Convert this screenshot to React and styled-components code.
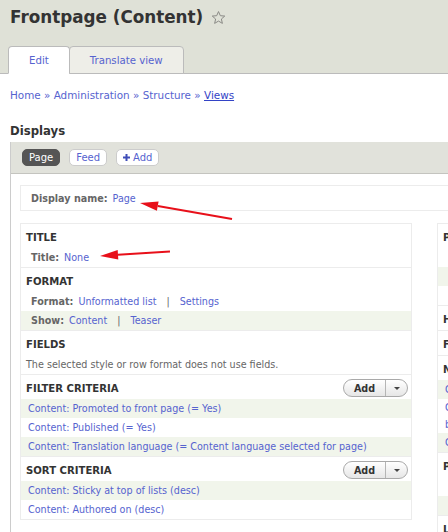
import React from "react";
import styled, { createGlobalStyle } from "styled-components";

const GlobalStyle = createGlobalStyle`
  *, *::before, *::after {
    box-sizing: border-box;
  }
  html, body {
    margin: 0;
    padding: 0;
    background: #fff;
    overflow: hidden;
  }
  body {
    font-family: "DejaVu Sans", Verdana, sans-serif;
    color: #333;
  }
`;

const LINK = "#5663cf";
const STRIPE = "#f1f5eb";

// Page shell
const Page = styled.div`
  position: relative;
  width: 448px;
  height: 532px;
  overflow: hidden;
`;

const Header = styled.header`
  background: #dfe1d7;
  border-bottom: 1px solid #bbb;
  padding: 6px 0 0 8px;
`;

const Title = styled.h1`
  display: flex;
  align-items: center;
  gap: 8px;
  margin: 0 0 18px 2px;
  height: 22px;
  font-size: 16.8px;
  font-weight: bold;
  color: #333;
  white-space: nowrap;
`;

const Tabs = styled.nav`
  display: flex;
  margin-bottom: -1px;
`;

const Tab = styled.a`
  display: flex;
  align-items: center;
  height: 28px;
  padding: 0 20px;
  margin-right: -1px;
  font-size: 10.2px;
  color: ${LINK};
  text-decoration: none;
  border: 1px solid #bbb;
  border-bottom-color: ${p => (p.$active ? "#fff" : "#bbb")};
  border-radius: 4px 4px 0 0;
  background: ${p => (p.$active ? "#fff" : "#eeeee8")};
`;

const Breadcrumb = styled.div`
  padding: 13px 0 0 10px;
  line-height: 16px;
  font-size: 10.4px;
  color: ${LINK};
  white-space: nowrap;
`;

const Crumb = styled.a`
  color: ${p => (p.$current ? "#3343c6" : LINK)};
  text-decoration: ${p => (p.$current ? "underline" : "none")};
`;

const SectionTitle = styled.h2`
  margin: 20px 0 3px 10px;
  line-height: 16px;
  font-size: 11.7px;
  font-weight: bold;
  color: #333;
`;

// Displays area
const DisplaysWrap = styled.div`
  margin-left: 10px;
  width: 700px;
  border-left: 1px solid #ccc;
  padding-bottom: 40px;
`;

const DisplayBar = styled.div`
  display: flex;
  align-items: center;
  gap: 9px;
  height: 32px;
  padding-left: 11px;
  background: #e1e2db;
  border-bottom: 1px solid #c4c4bf;
`;

const DisplayButton = styled.a`
  display: flex;
  align-items: center;
  gap: 3px;
  height: 17px;
  padding: 0 6px;
  font-size: 10px;
  border-radius: 5px;
  text-decoration: none;
  border: 1px solid ${p => (p.$active ? "#555" : "#ccc")};
  background: ${p => (p.$active ? "#555" : "#fff")};
  color: ${p => (p.$active ? "#fff" : LINK)};
`;

const Content = styled.div`
  padding: 11px 0 0 9px;
`;

const NameBox = styled.div`
  display: flex;
  align-items: center;
  height: 26px;
  padding-left: 10px;
  border: 1px solid #ececec;
  font-size: 9.6px;
`;

const Label = styled.span`
  font-weight: bold;
  color: #666;
  margin-right: 5px;
`;

const Link = styled.a`
  color: ${LINK};
  text-decoration: none;
`;

const Pipe = styled.span`
  color: #666;
  margin: 0 10px;
`;

const Columns = styled.div`
  display: flex;
  align-items: flex-start;
  gap: 25px;
  margin-top: 12px;
`;

const Column = styled.div`
  width: ${p => p.$width}px;
  flex: none;
  border: 1px solid #ececec;
  background: #fff;
`;

const Section = styled.section`
  padding-top: 2px;
  & + & {
    border-top: 1px solid #ececec;
  }
`;

const SectionHead = styled.div`
  display: flex;
  align-items: center;
  justify-content: space-between;
  height: 22px;
  padding: 0 3px 0 5px;
`;

const HeadText = styled.h3`
  margin: 0;
  font-size: 10.1px;
  font-weight: bold;
  text-transform: uppercase;
  color: #333;
  white-space: nowrap;
`;

const Row = styled.div`
  display: flex;
  align-items: center;
  min-height: 19px;
  line-height: ${p => (p.$lines ? "17px" : "19px")};
  padding-left: ${p => (p.$indent ? 10 : 7)}px;
  font-size: 9.6px;
  color: ${p => (p.$muted ? "#666" : LINK)};
  background: ${p => (p.$striped ? STRIPE : "transparent")};
  white-space: nowrap;
`;

const AddButton = styled.div`
  display: flex;
  height: 18px;
  border: 1px solid #a9a9a9;
  border-radius: 9px;
  background: linear-gradient(#ffffff, #e6e6e6);
  overflow: hidden;
`;

const AddLabel = styled.span`
  display: flex;
  align-items: center;
  justify-content: center;
  width: 42px;
  font-size: 9.6px;
  font-weight: bold;
  color: #333;
  border-right: 1px solid #b5b5b5;
`;

const AddCaret = styled.span`
  display: flex;
  align-items: center;
  justify-content: center;
  width: 21px;
  &::after {
    content: "";
    border-left: 3.5px solid transparent;
    border-right: 3.5px solid transparent;
    border-top: 3.5px solid #444;
  }
`;

const Overlay = styled.svg`
  position: absolute;
  left: 0;
  top: 0;
  pointer-events: none;
`;

const Star = () => (
  <svg width="15" height="15" viewBox="0 0 24 24">
    <path
      d="M12 2.5l2.9 6.6 7.1.6-5.4 4.7 1.6 7-6.2-3.7-6.2 3.7 1.6-7L2 9.7l7.1-.6z"
      fill="none"
      stroke="#8a8a86"
      strokeWidth="1.6"
      strokeLinejoin="round"
    />
  </svg>
);

const Plus = () => (
  <svg width="7" height="7" viewBox="0 0 7 7">
    <path d="M2.5 0h2v2.5H7v2H4.5V7h-2V4.5H0v-2h2.5z" fill="#3f4db8" />
  </svg>
);

const Add = () => (
  <AddButton>
    <AddLabel>Add</AddLabel>
    <AddCaret />
  </AddButton>
);

const Arrow = ({ tail, tip, base1, base2 }) => (
  <g>
    <line x1={tail[0]} y1={tail[1]} x2={(base1[0] + base2[0]) / 2} y2={(base1[1] + base2[1]) / 2} stroke="#e8101a" strokeWidth="2" />
    <polygon points={`${tip.join(",")} ${base1.join(",")} ${base2.join(",")}`} fill="#e8101a" />
  </g>
);

export default function App() {
  return (
    <Page>
      <GlobalStyle />
      <Header>
        <Title>
          Frontpage (Content) <Star />
        </Title>
        <Tabs>
          <Tab $active>Edit</Tab>
          <Tab>Translate view</Tab>
        </Tabs>
      </Header>

      <Breadcrumb>
        <Crumb>Home</Crumb> » <Crumb>Administration</Crumb> » <Crumb>Structure</Crumb> »{" "}
        <Crumb $current>Views</Crumb>
      </Breadcrumb>

      <SectionTitle>Displays</SectionTitle>

      <DisplaysWrap>
        <DisplayBar>
          <DisplayButton $active>Page</DisplayButton>
          <DisplayButton>Feed</DisplayButton>
          <DisplayButton>
            <Plus />
            Add
          </DisplayButton>
        </DisplayBar>

        <Content>
          <NameBox>
            <Label>Display name:</Label>
            <Link>Page</Link>
          </NameBox>

          <Columns>
            <Column $width={392}>
              <Section>
                <SectionHead>
                  <HeadText>Title</HeadText>
                </SectionHead>
                <Row $indent>
                  <Label>Title:</Label>
                  <Link>None</Link>
                </Row>
              </Section>

              <Section>
                <SectionHead>
                  <HeadText>Format</HeadText>
                </SectionHead>
                <Row $indent>
                  <Label>Format:</Label>
                  <Link>Unformatted list</Link>
                  <Pipe>|</Pipe>
                  <Link>Settings</Link>
                </Row>
                <Row $indent $striped>
                  <Label>Show:</Label>
                  <Link>Content</Link>
                  <Pipe>|</Pipe>
                  <Link>Teaser</Link>
                </Row>
              </Section>

              <Section>
                <SectionHead>
                  <HeadText>Fields</HeadText>
                </SectionHead>
                <Row $muted style={{ paddingLeft: 5 }}>
                  The selected style or row format does not use fields.
                </Row>
              </Section>

              <Section>
                <SectionHead>
                  <HeadText>Filter criteria</HeadText>
                  <Add />
                </SectionHead>
                <Row $striped>Content: Promoted to front page (= Yes)</Row>
                <Row>Content: Published (= Yes)</Row>
                <Row $striped>Content: Translation language (= Content language selected for page)</Row>
              </Section>

              <Section>
                <SectionHead>
                  <HeadText>Sort criteria</HeadText>
                  <Add />
                </SectionHead>
                <Row $striped>Content: Sticky at top of lists (desc)</Row>
                <Row>Content: Authored on (desc)</Row>
              </Section>
            </Column>

            <Column $width={220}>
              <Section>
                <SectionHead>
                  <HeadText>Page settings</HeadText>
                </SectionHead>
                <Row $indent>
                  <Label>Path:</Label>
                  <Link>/node</Link>
                </Row>
                <Row $indent $striped>
                  <Label>Menu:</Label>
                  <Link>No menu</Link>
                </Row>
                <Row $indent>
                  <Label>Access:</Label>
                  <Link>View published content</Link>
                </Row>
              </Section>
              <Section>
                <SectionHead>
                  <HeadText>Header</HeadText>
                </SectionHead>
              </Section>
              <Section>
                <SectionHead>
                  <HeadText>Footer</HeadText>
                </SectionHead>
              </Section>
              <Section>
                <SectionHead>
                  <HeadText>No results behavior</HeadText>
                </SectionHead>
                <Row $striped>Custom: Title override</Row>
                <Row $lines>
                  Custom: Text area (No front page content
                  <br />
                  been created yet.)
                </Row>
                <Row $striped>Custom: Text area</Row>
              </Section>
              <Section>
                <SectionHead>
                  <HeadText>Pager</HeadText>
                </SectionHead>
                <Row $indent>
                  <Label>Use pager:</Label>
                  <Link>Mini</Link>
                </Row>
                <Row $indent $striped>
                  <Label>More link:</Label>
                  <Link>No</Link>
                </Row>
              </Section>
              <Section>
                <SectionHead>
                  <HeadText>Language</HeadText>
                </SectionHead>
              </Section>
            </Column>
          </Columns>
        </Content>
      </DisplaysWrap>

      <Overlay width="448" height="532">
        <Arrow tail={[232, 219]} tip={[140, 203]} base1={[158.6, 201.4]} base2={[156.9, 210.8]} />
        <Arrow tail={[170, 251.5]} tip={[100, 256]} base1={[118.3, 259.5]} base2={[117.7, 250]} />
      </Overlay>
    </Page>
  );
}
